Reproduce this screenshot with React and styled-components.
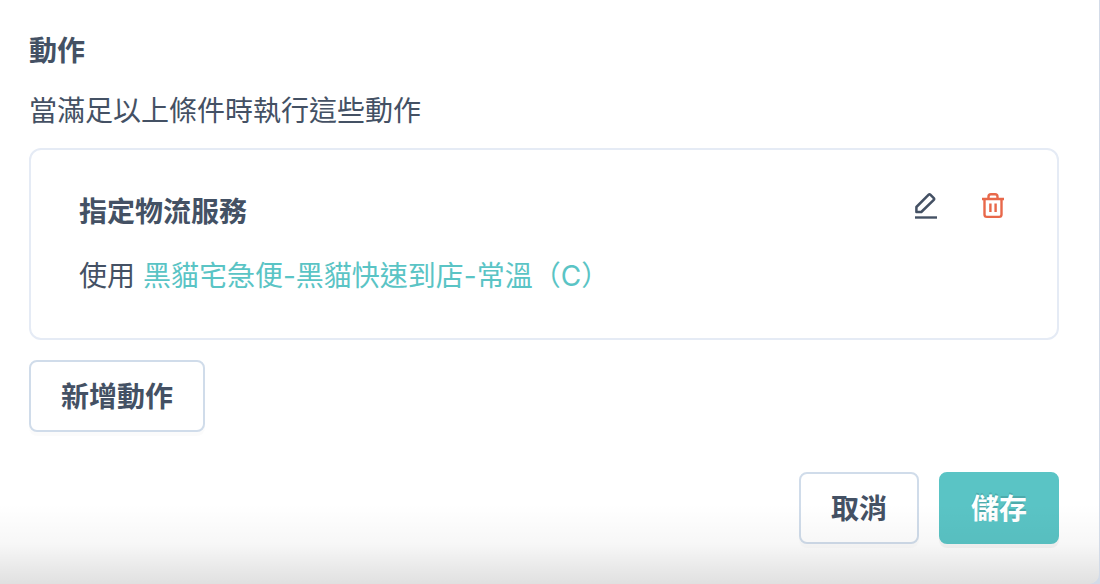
import React from "react";
import styled, { createGlobalStyle } from "styled-components";

const GlobalStyles = createGlobalStyle`
  * {
    box-sizing: border-box;
  }
  body {
    margin: 0;
    background-color: #d3dbe8;
    color: #445164;
    font-family: Inter, "Noto Sans CJK TC", sans-serif;
    font-size: 28px;
    line-height: 40px;
    -webkit-font-smoothing: antialiased;
  }
  h2, h3, p {
    margin: 0;
    font-size: inherit;
  }
`;

const PanelStyles = styled.section`
  position: relative;
  overflow: hidden;
  margin-right: 1px;
  padding: 31px 40px 40px 29px;
  background-color: #fff;
  border-bottom-right-radius: 10px;
`;

const Title = styled.h2`
  font-weight: 600;
`;

const Description = styled.p`
  margin-top: 20px;
`;

const Card = styled.article`
  display: flex;
  justify-content: space-between;
  align-items: flex-start;
  margin: 17px 0 20px;
  padding: 39px 48px 42px;
  border: 2px solid #e5ebf5;
  border-radius: 12px;
`;

const CardTitle = styled.h3`
  margin-bottom: 19px;
  font-weight: 600;
  line-height: 46px;
`;

const ServiceLink = styled.a`
  color: #5ac4c5;
  text-decoration: none;
`;

/* full-width brackets that hug the text inside them */
const Bracket = styled.span`
  font-family: "Noto Sans CJK JP", sans-serif;
`;

const CardTools = styled.div`
  display: flex;
  gap: 36px;
`;

const IconButton = styled.button`
  display: flex;
  padding: 0;
  border: 0;
  background: none;
  color: ${(props) => (props.$danger ? "#e8684a" : "#445164")};
  cursor: pointer;
`;

const Button = styled.button`
  height: 72px;
  padding: 2px 30px 0;
  border: 2px solid ${(props) => (props.$primary ? "#5ac4c5" : "#d0dcea")};
  border-radius: 8px;
  background-color: ${(props) => (props.$primary ? "#5ac4c5" : "#fff")};
  box-shadow: 0 4px 0 rgba(0, 0, 0, ${(props) => (props.$primary ? 0.04 : 0.016)});
  color: ${(props) => (props.$primary ? "#fff" : "inherit")};
  font: inherit;
  font-weight: 600;
  text-shadow: ${(props) =>
    props.$primary ? "0 -2px 0 rgba(0, 0, 0, 0.12)" : "none"};
  cursor: pointer;
`;

const Footer = styled.footer`
  display: flex;
  justify-content: flex-end;
  gap: 20px;
  margin-top: 40px;
`;

const BottomShade = styled.div`
  position: absolute;
  right: 0;
  bottom: 0;
  left: 0;
  height: 80px;
  background: linear-gradient(
    rgba(0, 0, 0, 0),
    rgba(0, 0, 0, 0.03) 50%,
    rgba(0, 0, 0, 0.12)
  );
  pointer-events: none;
`;

const EditIcon = () => (
  <svg width="32" height="32" viewBox="0 0 32 32" fill="none" aria-hidden="true">
    <path
      d="M7.4 18 L19.7 5.7 Q20.5 4.9 21.3 5.7 L24.8 9.2 Q25.6 10 24.8 10.8 L12.3 23 H7.4 Z"
      stroke="currentColor"
      strokeWidth="2.5"
      strokeLinejoin="round"
    />
    <path d="M6 28.5 H28" stroke="currentColor" strokeWidth="2.4" />
  </svg>
);

const TrashIcon = () => (
  <svg width="32" height="32" viewBox="0 0 32 32" fill="none" aria-hidden="true">
    <path
      d="M5 10 H27 M7.5 10 V25.5 Q7.5 27.9 9.9 27.9 H22.1 Q24.5 27.9 24.5 25.5 V10 M11.5 9.5 V7.8 Q11.5 5.3 14 5.3 H18 Q20.5 5.3 20.5 7.8 V9.5"
      stroke="currentColor"
      strokeWidth="2.4"
    />
    <path d="M13.4 14.5 V23 M18.6 14.5 V23" stroke="currentColor" strokeWidth="2.4" />
  </svg>
);

const ActionCard = () => {
  return (
    <Card>
      <div>
        <CardTitle>指定物流服務</CardTitle>
        <p>
          使用{" "}
          <ServiceLink href="#service">
            黑貓宅急便-黑貓快速到店-常溫<Bracket>（</Bracket>C<Bracket>）</Bracket>
          </ServiceLink>
        </p>
      </div>
      <CardTools>
        <IconButton type="button" aria-label="編輯">
          <EditIcon />
        </IconButton>
        <IconButton type="button" aria-label="刪除" $danger>
          <TrashIcon />
        </IconButton>
      </CardTools>
    </Card>
  );
};

const App = () => {
  return (
    <>
      <GlobalStyles />
      <PanelStyles lang="zh-Hant">
        <Title>動作</Title>
        <Description>當滿足以上條件時執行這些動作</Description>
        <ActionCard />
        <Button type="button">新增動作</Button>
        <Footer>
          <Button type="button">取消</Button>
          <Button type="submit" $primary>
            儲存
          </Button>
        </Footer>
        <BottomShade />
      </PanelStyles>
    </>
  );
};

export default App;
